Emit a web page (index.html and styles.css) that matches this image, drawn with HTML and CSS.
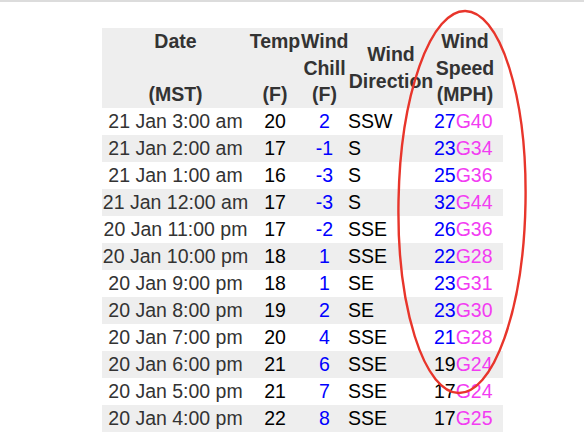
FILE: index.html
```html
<!DOCTYPE html>
<html>
<head>
<meta charset="utf-8">
<link rel="stylesheet" href="styles.css">
</head>
<body>
<div class="topbar"></div>
<div class="wrap">
<table class="obs">
<colgroup>
<col class="c-date"><col class="c-temp"><col class="c-chill"><col class="c-dir"><col class="c-speed">
</colgroup>
<thead>
<tr>
<th>Date<br><br>(MST)</th>
<th>Temp<br><br>(F)</th>
<th>Wind<br>Chill<br>(F)</th>
<th>Wind<br>Direction</th>
<th class="h-speed">Wind<br>Speed<br>(MPH)</th>
</tr>
</thead>
<tbody>
<tr><td class="d">21 Jan 3:00 am</td><td class="t">20</td><td class="c">2</td><td class="w">SSW</td><td class="s"><span class="b">27</span><span class="g">G40</span></td></tr>
<tr><td class="d">21 Jan 2:00 am</td><td class="t">17</td><td class="c">-1</td><td class="w">S</td><td class="s"><span class="b">23</span><span class="g">G34</span></td></tr>
<tr><td class="d">21 Jan 1:00 am</td><td class="t">16</td><td class="c">-3</td><td class="w">S</td><td class="s"><span class="b">25</span><span class="g">G36</span></td></tr>
<tr><td class="d">21 Jan 12:00 am</td><td class="t">17</td><td class="c">-3</td><td class="w">S</td><td class="s"><span class="b">32</span><span class="g">G44</span></td></tr>
<tr><td class="d">20 Jan 11:00 pm</td><td class="t">17</td><td class="c">-2</td><td class="w">SSE</td><td class="s"><span class="b">26</span><span class="g">G36</span></td></tr>
<tr><td class="d">20 Jan 10:00 pm</td><td class="t">18</td><td class="c">1</td><td class="w">SSE</td><td class="s"><span class="b">22</span><span class="g">G28</span></td></tr>
<tr><td class="d">20 Jan 9:00 pm</td><td class="t">18</td><td class="c">1</td><td class="w">SE</td><td class="s"><span class="b">23</span><span class="g">G31</span></td></tr>
<tr><td class="d">20 Jan 8:00 pm</td><td class="t">19</td><td class="c">2</td><td class="w">SE</td><td class="s"><span class="b">23</span><span class="g">G30</span></td></tr>
<tr><td class="d">20 Jan 7:00 pm</td><td class="t">20</td><td class="c">4</td><td class="w">SSE</td><td class="s"><span class="b">21</span><span class="g">G28</span></td></tr>
<tr><td class="d">20 Jan 6:00 pm</td><td class="t">21</td><td class="c">6</td><td class="w">SSE</td><td class="s">19<span class="g">G24</span></td></tr>
<tr><td class="d">20 Jan 5:00 pm</td><td class="t">21</td><td class="c">7</td><td class="w">SSE</td><td class="s">17<span class="g">G24</span></td></tr>
<tr><td class="d">20 Jan 4:00 pm</td><td class="t">22</td><td class="c">8</td><td class="w">SSE</td><td class="s">17<span class="g">G25</span></td></tr>
</tbody>
</table>
</div>
<svg class="circle" width="584" height="436" viewBox="0 0 584 436">
<ellipse cx="462" cy="202" rx="63.5" ry="191" transform="rotate(1 462 202)" fill="none" stroke="#e8352b" stroke-width="2.4"/>
</svg>
</body>
</html>
```
FILE: styles.css
```css
html, body {
  margin: 0;
  padding: 0;
  background: #fff;
}
body {
  width: 584px;
  height: 436px;
  overflow: hidden;
  position: relative;
  font-family: "Liberation Sans", Arial, sans-serif;
  font-size: 19.5px;
}
.topbar {
  height: 2px;
  background: #dcdcdc;
}
.wrap {
  padding: 26px 0 0 102px;
}
.obs {
  border-collapse: collapse;
  border-spacing: 0;
  table-layout: fixed;
  width: 401px;
}
.c-date { width: 147px; }
.c-temp { width: 52px; }
.c-chill { width: 47px; }
.c-dir { width: 86px; }
.c-speed { width: 69px; }
.obs thead tr {
  background: #eeeeee;
  height: 79px;
}
.obs th {
  padding: 0;
  font-weight: bold;
  line-height: 26.5px;
  color: #333;
  text-align: center;
  vertical-align: middle;
  white-space: nowrap;
}
.obs th.h-speed {
  padding-right: 7px;
}
.obs td {
  padding: 0;
  height: 27px;
  line-height: 27px;
  white-space: nowrap;
  vertical-align: middle;
  color: #000;
}
.obs tbody tr:nth-child(even) {
  background: #eeeeee;
}
.obs td.d {
  text-align: center;
  color: #333;
}
.obs td.t {
  text-align: center;
}
.obs td.c {
  text-align: center;
  color: #0000ff;
}
.obs td.w {
  text-align: left;
}
.obs td.s {
  text-align: left;
}
.b {
  color: #0000ff;
}
.g {
  color: #f23cf2;
}
.circle {
  position: absolute;
  left: 0;
  top: 0;
  pointer-events: none;
}
```
